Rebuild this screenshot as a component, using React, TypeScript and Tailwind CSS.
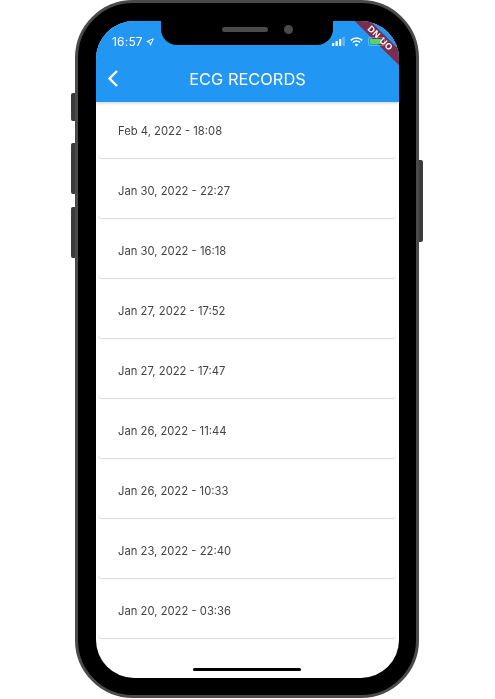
const RECORDS = [
  'Feb 4, 2022 - 18:08',
  'Jan 30, 2022 - 22:27',
  'Jan 30, 2022 - 16:18',
  'Jan 27, 2022 - 17:52',
  'Jan 27, 2022 - 17:47',
  'Jan 26, 2022 - 11:44',
  'Jan 26, 2022 - 10:33',
  'Jan 23, 2022 - 22:40',
  'Jan 20, 2022 - 03:36',
];

function StatusIcons() {
  return (
    <div className="relative z-10 flex items-center gap-[4px]">
      <svg width="14" height="9" viewBox="0 0 14 9">
        <rect x="0" y="6" width="2.3" height="3" rx="0.5" fill="#fff" />
        <rect x="3.5" y="4" width="2.3" height="5" rx="0.5" fill="#fff" />
        <rect x="7" y="2" width="2.3" height="7" rx="0.5" fill="#fff" />
        <rect x="10.5" y="0" width="2.3" height="9" rx="0.5" fill="#fff" opacity="0.35" />
      </svg>
      <svg width="13" height="10" viewBox="0 0 13 10" fill="none" stroke="#fff" strokeWidth="1.5">
        <path d="M0.8 3.4a8 8 0 0 1 11.4 0" />
        <path d="M2.9 5.6a5 5 0 0 1 7.2 0" />
        <path d="M5 7.7a2.1 2.1 0 0 1 3 0L6.5 9.3z" fill="#fff" strokeWidth="0.6" />
      </svg>
      <div className="ml-[1px] flex h-[9px] w-[17px] items-center rounded-[2px] border border-white/30 p-px">
        <div className="h-full w-[11px] rounded-[1px] bg-[#4cd964]" />
      </div>
    </div>
  );
}

export default function App() {
  return (
    <div className="h-[699px] w-[495px] bg-white pl-[75px] [font-family:Inter,sans-serif]">
      <div className="relative h-[698px] w-[344px] rounded-[58px] border-[3px] border-[#4a4a4a] bg-black pl-[18px] pt-[18px] blur-[0.45px]">
        {/* side buttons */}
        <div className="absolute left-[-7px] top-[90px] h-[28px] w-[4px] rounded-l-[2px] bg-[#3c3c3c]" />
        <div className="absolute left-[-7px] top-[140px] h-[51px] w-[4px] rounded-l-[2px] bg-[#3c3c3c]" />
        <div className="absolute left-[-7px] top-[204px] h-[51px] w-[4px] rounded-l-[2px] bg-[#3c3c3c]" />
        <div className="absolute right-[-7px] top-[157px] h-[82px] w-[4px] rounded-r-[2px] bg-[#3c3c3c]" />

        <div className="relative flex h-[657px] w-[303px] flex-col overflow-hidden rounded-[38px] bg-white">
          <header className="relative h-[81px] shrink-0 bg-[#2196f3] text-white shadow-[0_1px_3px_rgba(0,0,0,0.2)]">
            {/* debug ribbon band, sits under the status icons */}
            <div className="absolute right-[-29px] top-[12px] h-[11px] w-[96px] rotate-45 bg-[#7b2d4f]" />
            <div className="relative flex h-[38px] items-center justify-between pl-[16px] pr-[14px] pt-[3px]">
              <div className="flex items-center gap-[3px] text-[12px] tracking-[0.2px]">
                <span>16:57</span>
                <svg width="8" height="8" viewBox="0 0 8 8" fill="none" stroke="#fff" strokeWidth="1">
                  <path d="M7.3 0.7 0.8 3.6l3 .6.6 3z" />
                </svg>
              </div>
              <StatusIcons />
            </div>
            <div className="relative flex h-[41px] items-center justify-center pb-[1px] text-[16.4px]">
              <svg className="absolute left-[11px] top-[10px]" width="12" height="19" viewBox="0 0 12 19" fill="none" stroke="#fff" strokeWidth="2.4">
                <path d="M10 2 2.5 9.5l7.5 7.5" />
              </svg>
              ECG RECORDS
            </div>
            <div className="absolute right-[-29px] top-[12px] z-20 flex h-[11px] w-[96px] rotate-45 items-center justify-center text-[9px] font-bold leading-none tracking-[0.5px] [font-family:'Liberation_Sans',sans-serif]">
              DN UO
            </div>
          </header>

          <ul className="flex flex-col gap-[4px] pl-[2px] pr-[3px]">
            {RECORDS.map(record => (
              <li
                key={record}
                className="flex h-[56px] items-center rounded-b-[4px] bg-white pl-[20px] pt-[2px] text-[11.25px] text-[#444] shadow-[0_1px_1px_rgba(0,0,0,0.14)]"
              >
                {record}
              </li>
            ))}
          </ul>

          <div className="absolute bottom-[7px] left-[97px] h-[3px] w-[108px] rounded-full bg-black" />
          {/* notch */}
          <div className="absolute left-[65px] top-0 z-30 flex h-[24px] w-[172px] items-start gap-[16px] rounded-b-[16px] bg-black pl-[61px] pt-[6px]">
            <div className="h-[5px] w-[46px] rounded-full bg-[#4a4a4a]" />
            <div className="mt-[-2px] h-[9px] w-[9px] rounded-full bg-[#4a4a4a]" />
          </div>
        </div>
      </div>
    </div>
  );
}
